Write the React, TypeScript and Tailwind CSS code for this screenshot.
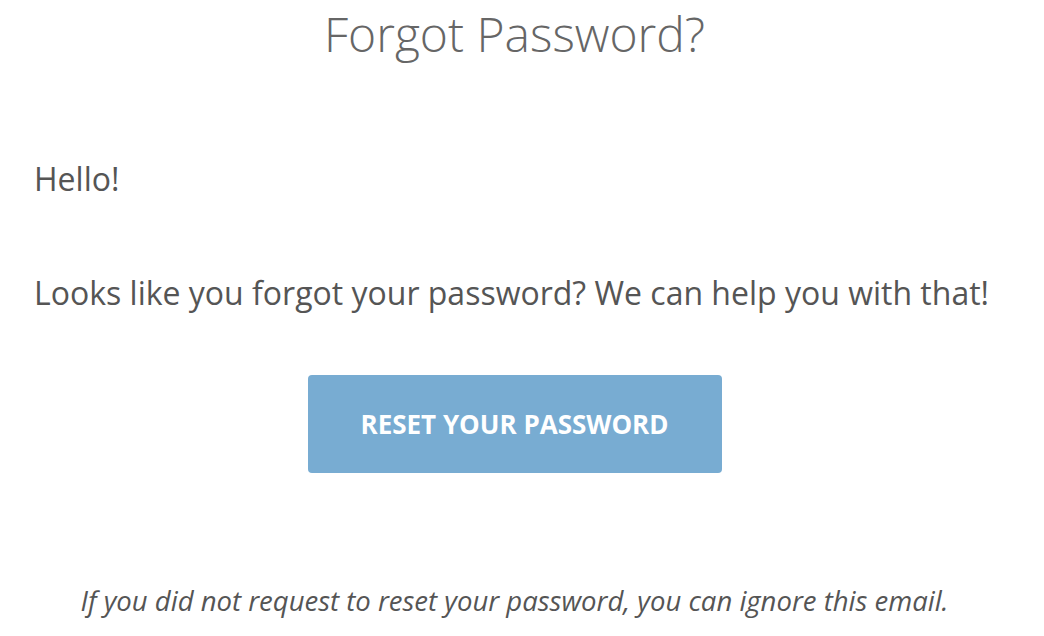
import React from 'react';

const App = () => {
  return (
    <div className="w-[1044px] h-[636px] bg-white overflow-hidden font-['Open_Sans',sans-serif] text-[#555555]">
      <div className="w-[1029px]">
        <h1 className="text-center text-[48px] font-light leading-[60px] pt-[4px] text-[#666666]">
          Forgot Password?
        </h1>

        <div className="px-[34px]">
          <p className="mt-[95px] text-[32px] leading-[40px]">Hello!</p>
          <p className="mt-[74px] text-[32px] leading-[40px]">
            Looks like you forgot your password? We can help you with that!
          </p>
        </div>

        <div className="flex justify-center mt-[62px]">
          <button className="w-[414px] h-[98px] rounded-[4px] bg-[#78acd2] text-white text-[26px] font-bold uppercase">
            Reset your password
          </button>
        </div>

        <p className="text-center mt-[110px] text-[27.5px] italic leading-[36px] text-[#555555]">
          If you did not request to reset your password, you can ignore this email.
        </p>
      </div>
    </div>
  );
};

export default App;
